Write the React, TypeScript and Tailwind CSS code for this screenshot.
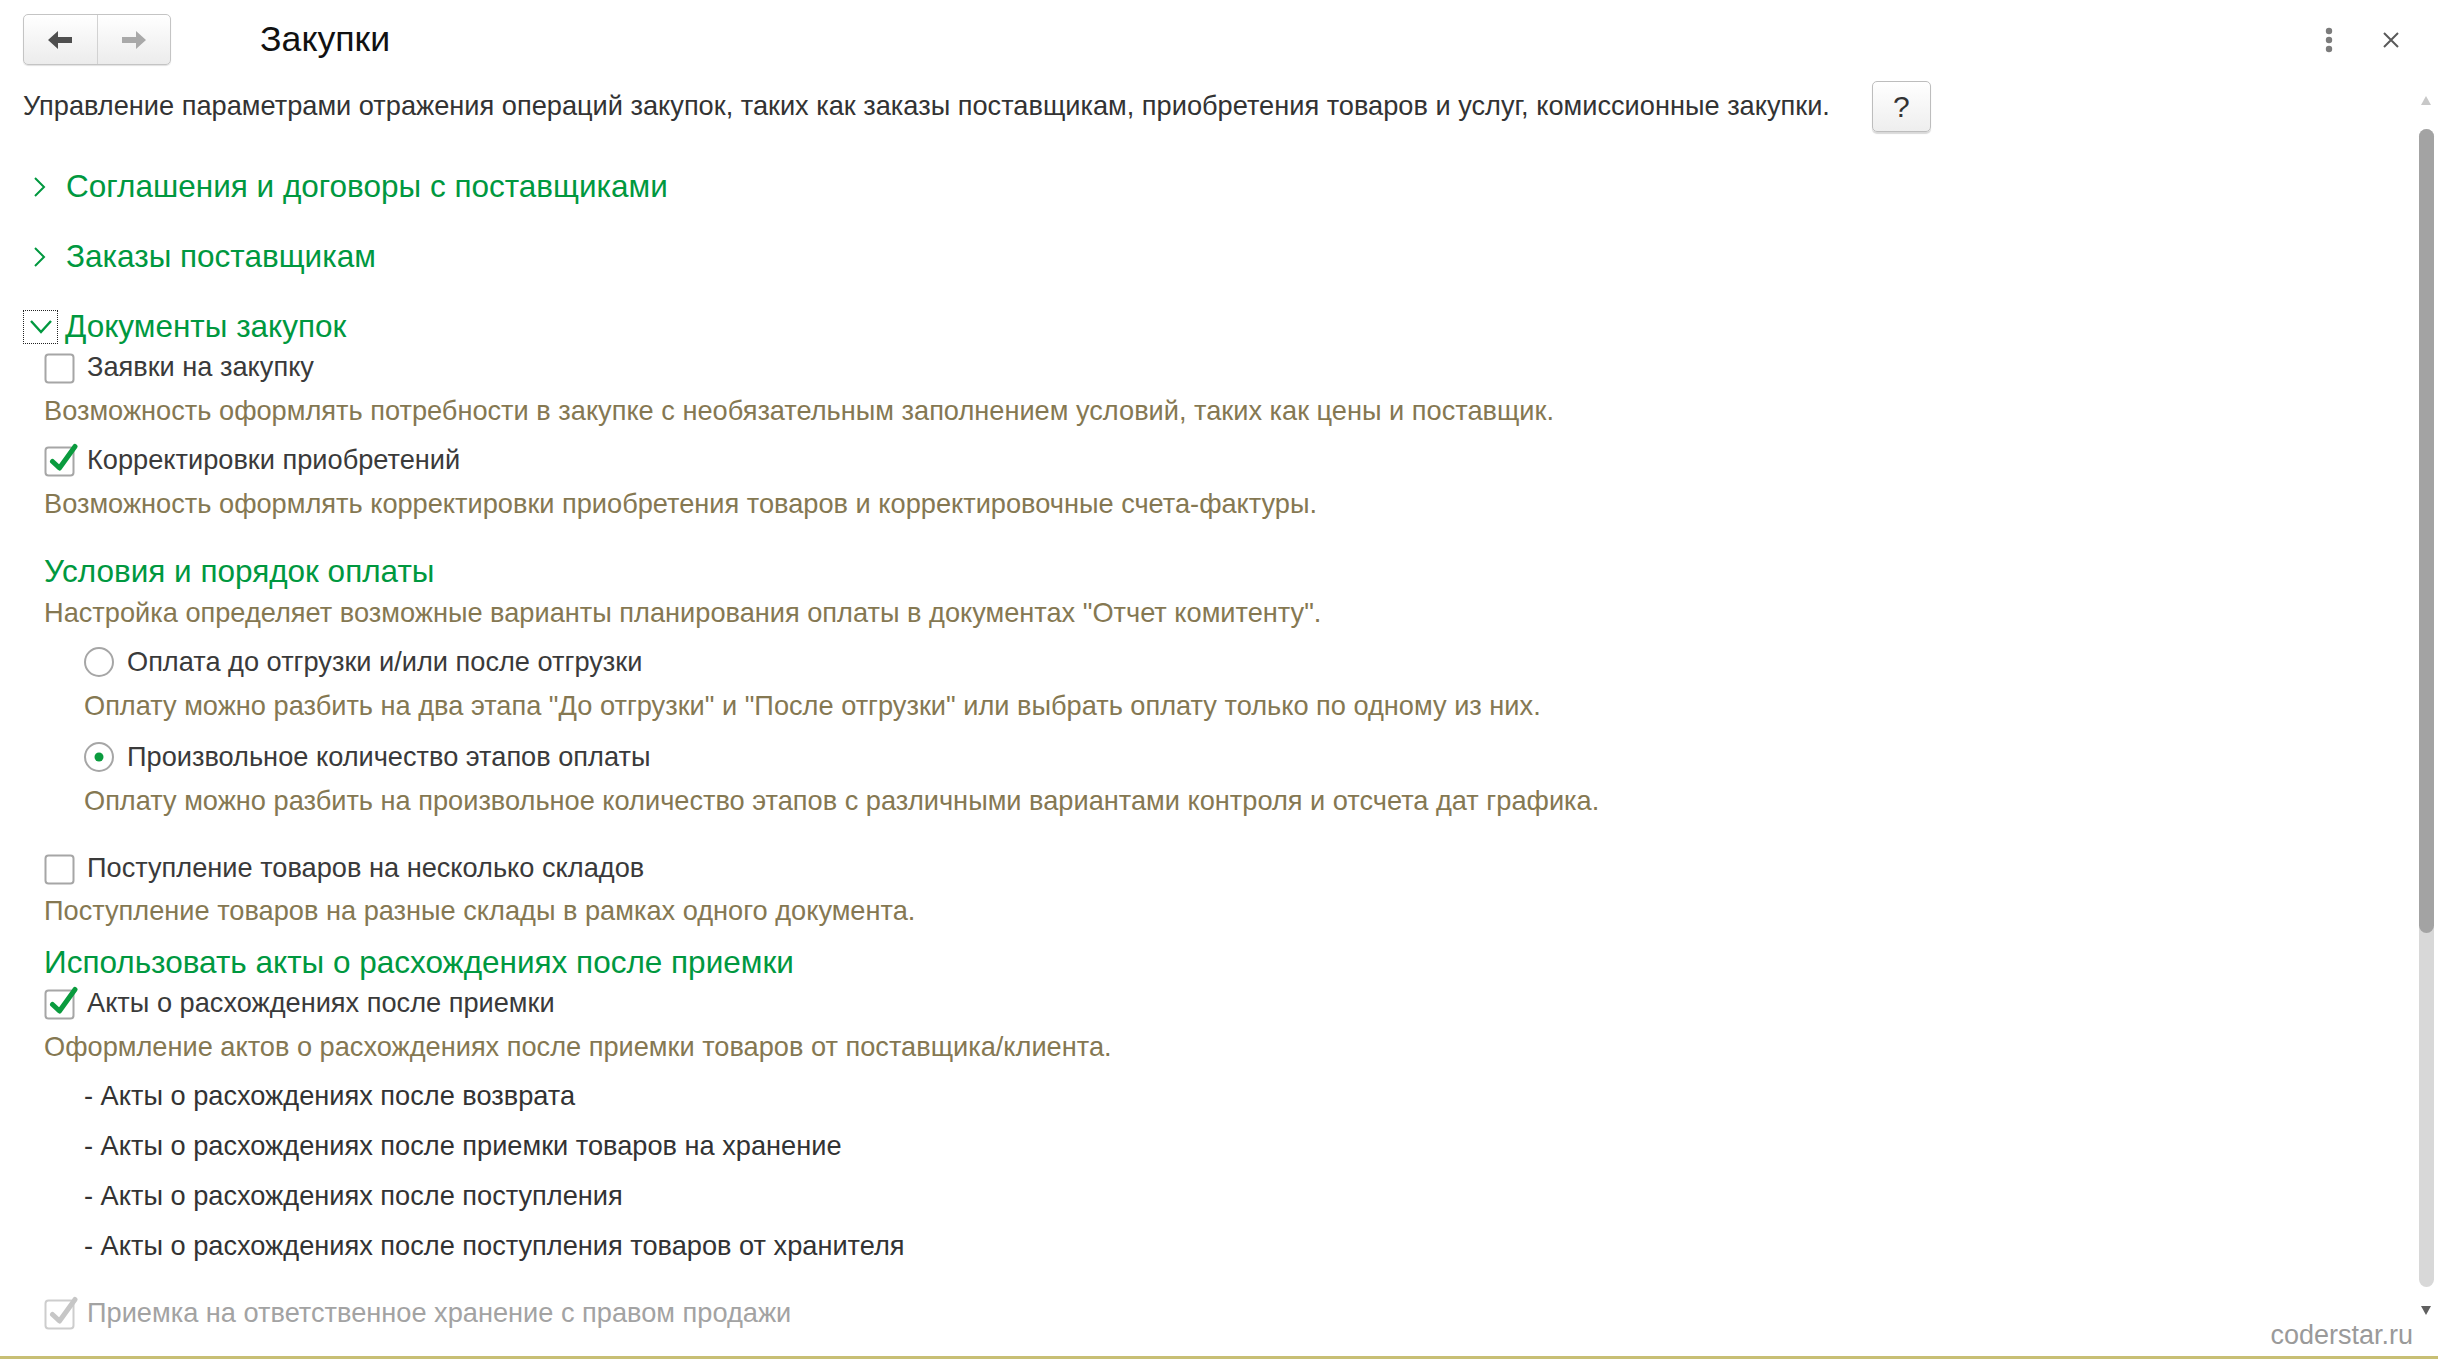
import React from 'react';

const GREEN = '#00983f';

const ChevronRight = () => (
  <svg width="16" height="24" viewBox="0 0 16 24" className="shrink-0">
    <path d="M3 3 L12 12 L3 21" fill="none" stroke={GREEN} strokeWidth={2} />
  </svg>
);

const Checkbox: React.FC<{ checked?: boolean; disabled?: boolean }> = ({ checked, disabled }) => {
  const tick = disabled ? '#c6c6c6' : '#0a9b3e';
  return (
    <svg width="34" height="36" viewBox="0 0 34 36" className="shrink-0">
      <rect x="1.5" y="5.5" width="28" height="28" rx="3" fill="#fff" stroke={disabled ? '#cdcdcd' : '#a6a6a6'} strokeWidth={2} />
      {checked && (
        <path d="M8.5 19.5 L15.5 26 L31 4.5" fill="none" stroke={tick} strokeWidth={5} strokeLinecap="round" strokeLinejoin="round" />
      )}
    </svg>
  );
};

const Radio: React.FC<{ checked?: boolean }> = ({ checked }) => (
  <svg width="32" height="32" viewBox="0 0 32 32" className="shrink-0">
    <circle cx="16" cy="16" r="14" fill="#fff" stroke="#a6a6a6" strokeWidth={2} />
    {checked && <circle cx="16" cy="16" r="4.5" fill="#0a9b3e" />}
  </svg>
);

const Desc: React.FC<{ className?: string; children: React.ReactNode }> = ({ className, children }) => (
  <div className={`flex h-[40px] items-center text-[27.2px] text-[#857852] ${className ?? ''}`}>{children}</div>
);

const CheckRow: React.FC<{ checked?: boolean; disabled?: boolean; className?: string; children: React.ReactNode }> = ({
  checked,
  disabled,
  className,
  children,
}) => (
  <div className={`flex h-[40px] items-center gap-[9px] pl-[21px] text-[27.2px] ${disabled ? 'text-[#a3a3a3]' : 'text-[#3a3a3a]'} ${className ?? ''}`}>
    <Checkbox checked={checked} disabled={disabled} />
    <span>{children}</span>
  </div>
);

const RadioRow: React.FC<{ checked?: boolean; className?: string; children: React.ReactNode }> = ({ checked, className, children }) => (
  <div className={`flex h-[40px] items-center gap-[12px] pl-[60px] text-[27.2px] text-[#3a3a3a] ${className ?? ''}`}>
    <Radio checked={checked} />
    <span>{children}</span>
  </div>
);

export default function App() {
  return (
    <div
      className="relative h-[1359px] w-full overflow-hidden bg-white"
      style={{ fontFamily: '"Liberation Sans", Arial, sans-serif' }}
    >
      {/* Header */}
      <div className="mt-[14px] flex h-[51px] items-center pl-[23px] pr-[38px]">
        <div className="flex h-[51px] w-[148px] overflow-hidden rounded-[5px] border border-[#c4c4c4] bg-gradient-to-b from-white to-[#ececec] shadow-[0_1px_1px_rgba(0,0,0,0.12)]">
          <div className="flex flex-1 items-center justify-center border-r border-[#d2d2d2]">
            <svg width="26" height="20" viewBox="0 0 26 20">
              <path d="M1 10 L11 1 L11 7 L25 7 L25 13 L11 13 L11 19 Z" fill="#4f4f4f" />
            </svg>
          </div>
          <div className="flex flex-1 items-center justify-center">
            <svg width="26" height="20" viewBox="0 0 26 20">
              <path d="M25 10 L15 1 L15 7 L1 7 L1 13 L15 13 L15 19 Z" fill="#a9a9a9" />
            </svg>
          </div>
        </div>
        <div className="ml-[89px] text-[35.7px] text-[#111]">Закупки</div>
        <div className="ml-auto flex items-center gap-[48px]">
          <svg width="10" height="26" viewBox="0 0 10 26">
            <circle cx="5" cy="4" r="3.2" fill="#7c7c7c" />
            <circle cx="5" cy="13" r="3.2" fill="#7c7c7c" />
            <circle cx="5" cy="22" r="3.2" fill="#7c7c7c" />
          </svg>
          <svg width="18" height="18" viewBox="0 0 18 18">
            <path d="M2 2 L16 16 M16 2 L2 16" stroke="#5a5a5a" strokeWidth={2} />
          </svg>
        </div>
      </div>

      <div className="pl-[23px]">
        {/* Intro line */}
        <div className="mt-[16px] flex h-[51px] items-center gap-[42px]">
          <span className="text-[27.2px] text-[#333]">
            Управление параметрами отражения операций закупок, таких как заказы поставщикам, приобретения товаров и услуг, комиссионные закупки.
          </span>
          <div className="flex h-[51px] w-[59px] items-center justify-center rounded-[5px] border border-[#bdbdbd] bg-gradient-to-b from-white to-[#eeeeee] text-[30px] text-[#333] shadow-[0_2px_1px_rgba(0,0,0,0.15)]">
            ?
          </div>
        </div>

        {/* Collapsed groups */}
        <div className="mt-[35px] flex h-[40px] items-center gap-[18px] pl-[9px] text-[31.5px]" style={{ color: GREEN }}>
          <ChevronRight />
          <span>Соглашения и договоры с поставщиками</span>
        </div>
        <div className="mt-[30px] flex h-[40px] items-center gap-[18px] pl-[9px] text-[31.5px]" style={{ color: GREEN }}>
          <ChevronRight />
          <span>Заказы поставщикам</span>
        </div>

        {/* Expanded group */}
        <div className="mt-[30px] flex h-[40px] items-center gap-[7px] text-[31.5px]" style={{ color: GREEN }}>
          <div className="flex h-[34px] w-[35px] items-center justify-center border border-dotted border-[#222]">
            <svg width="24" height="16" viewBox="0 0 24 16">
              <path d="M2 2 L12 13 L22 2" fill="none" stroke={GREEN} strokeWidth={2.4} />
            </svg>
          </div>
          <span>Документы закупок</span>
        </div>

        <CheckRow>Заявки на закупку</CheckRow>
        <Desc className="mt-[4px] pl-[21px]">
          Возможность оформлять потребности в закупке с необязательным заполнением условий, таких как цены и поставщик.
        </Desc>

        <CheckRow checked className="mt-[9px]">Корректировки приобретений</CheckRow>
        <Desc className="mt-[4px] pl-[21px]">
          Возможность оформлять корректировки приобретения товаров и корректировочные счета-фактуры.
        </Desc>

        <div className="mt-[28px] flex h-[40px] items-center pl-[21px] text-[31.5px]" style={{ color: GREEN }}>
          Условия и порядок оплаты
        </div>
        <Desc className="mt-[1px] pl-[21px]">
          Настройка определяет возможные варианты планирования оплаты в документах "Отчет комитенту".
        </Desc>

        <RadioRow className="mt-[9px]">Оплата до отгрузки и/или после отгрузки</RadioRow>
        <Desc className="mt-[4px] pl-[61px]">
          Оплату можно разбить на два этапа "До отгрузки" и "После отгрузки" или выбрать оплату только по одному из них.
        </Desc>

        <RadioRow checked className="mt-[11px]">Произвольное количество этапов оплаты</RadioRow>
        <Desc className="mt-[4px] pl-[61px]">
          Оплату можно разбить на произвольное количество этапов с различными вариантами контроля и отсчета дат графика.
        </Desc>

        <CheckRow className="mt-[27px]">Поступление товаров на несколько складов</CheckRow>
        <Desc className="mt-[3px] pl-[21px]">Поступление товаров на разные склады в рамках одного документа.</Desc>

        <div className="mt-[12px] flex h-[40px] items-center pl-[21px] text-[31.5px]" style={{ color: GREEN }}>
          Использовать акты о расхождениях после приемки
        </div>
        <CheckRow checked>Акты о расхождениях после приемки</CheckRow>
        <Desc className="mt-[4px] pl-[21px]">
          Оформление актов о расхождениях после приемки товаров от поставщика/клиента.
        </Desc>

        <div className="mt-[9px] flex flex-col gap-[10px] pl-[61px] text-[27.2px] text-[#333]">
          <div className="flex h-[40px] items-center">- Акты о расхождениях после возврата</div>
          <div className="flex h-[40px] items-center">- Акты о расхождениях после приемки товаров на хранение</div>
          <div className="flex h-[40px] items-center">- Акты о расхождениях после поступления</div>
          <div className="flex h-[40px] items-center">- Акты о расхождениях после поступления товаров от хранителя</div>
        </div>

        <CheckRow checked disabled className="mt-[27px]">
          Приемка на ответственное хранение с правом продажи
        </CheckRow>
      </div>

      {/* Scrollbar */}
      <div className="absolute right-[4px] top-[96px] flex w-[16px] justify-center">
        <div className="h-0 w-0 border-x-[5px] border-b-[9px] border-x-transparent border-b-[#c8c8c8]" />
      </div>
      <div className="absolute right-[4px] top-[129px] h-[1158px] w-[15px] rounded-full bg-[#d8d8d8]">
        <div className="h-[804px] w-full rounded-full bg-[#a3a3a3]" />
      </div>
      <div className="absolute right-[4px] top-[1306px] flex w-[16px] justify-center">
        <div className="h-0 w-0 border-x-[5px] border-t-[9px] border-x-transparent border-t-[#606060]" />
      </div>

      {/* Watermark */}
      <div className="absolute bottom-[4px] right-[25px] text-[27px] text-[#9a9a9a]">coderstar.ru</div>
      <div className="absolute bottom-0 left-0 h-[3px] w-full bg-[#c8bf74]" />
    </div>
  );
}
